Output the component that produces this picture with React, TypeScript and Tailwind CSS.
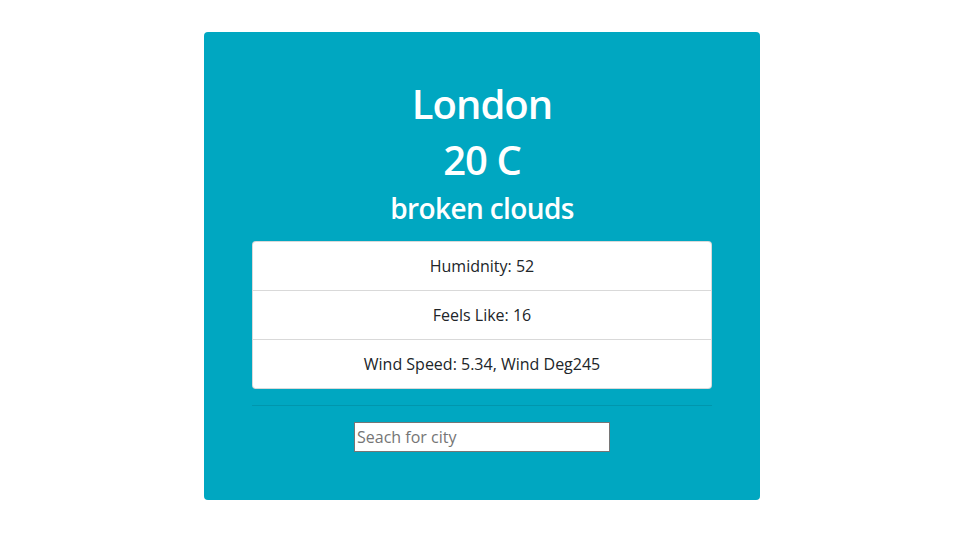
export default function App() {
  const details = ["Humidnity: 52", "Feels Like: 16", "Wind Speed: 5.34, Wind Deg245"];

  return (
    <div className="min-h-screen bg-white pt-8 font-['Open_Sans',sans-serif]">
      {/* Weather card */}
      <div className="mx-auto w-[556px] rounded bg-[#00a7c1] p-12 text-center text-white">
        <h1 className="mb-2 text-[40px] leading-[1.2] font-semibold tracking-[-1px]">London</h1>
        <h1 className="mb-2 text-[40px] leading-[1.2] font-semibold tracking-[-1px]">20 C</h1>
        <h3 className="mb-[15px] text-[28px] leading-[1.2] font-semibold tracking-[-0.6px]">broken clouds</h3>
        <ul className="rounded border border-black/15 bg-white text-base text-[#212529]">
          {details.map((d, i) => (
            <li key={i} className={`px-5 py-3 leading-6 ${i > 0 ? "border-t border-black/15" : ""}`}>
              {d}
            </li>
          ))}
        </ul>
        <hr className="my-4 border-t border-black/10" />
        <input
          type="text"
          placeholder="Seach for city"
          className="h-[30px] w-[256px] border border-[#767676] bg-white px-[2px] text-base text-black placeholder:text-[#757575] outline-none"
        />
      </div>
    </div>
  );
}
